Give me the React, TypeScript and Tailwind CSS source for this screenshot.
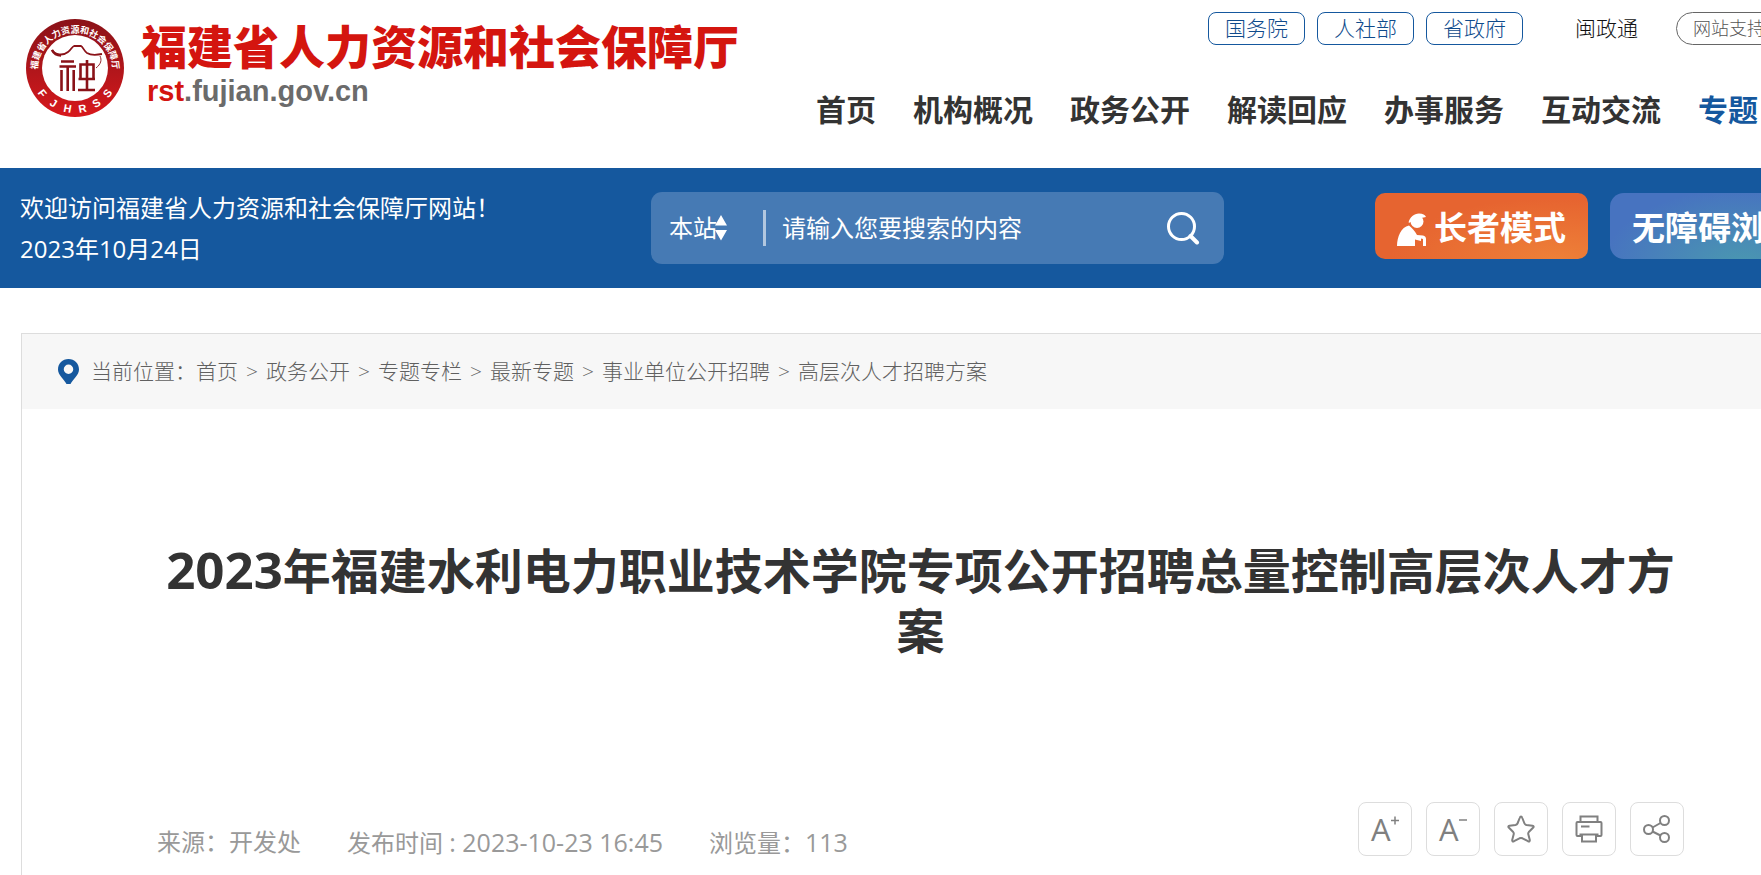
import type { ReactNode } from 'react';

type IconButtonProps = {
	label: string;
	children: ReactNode;
};

const topLinks = ['国务院', '人社部', '省政府'];
const navItems = ['首页', '机构概况', '政务公开', '解读回应', '办事服务', '互动交流', '专题'];
const crumbs = ['首页', '政务公开', '专题专栏', '最新专题', '事业单位公开招聘', '高层次人才招聘方案'];

const Emblem = () => (
	<svg viewBox="0 0 100 100" className="size-[100px] shrink-0" aria-hidden="true">
		<defs>
			<linearGradient id="ring" x1="0" y1="0" x2="0" y2="1">
				<stop offset="0" stopColor="#8a1218" />
				<stop offset="0.55" stopColor="#b3161b" />
				<stop offset="1" stopColor="#d8181c" />
			</linearGradient>
			<path id="upper" d="M12.5 52 A37.5 37.5 0 1 1 87.5 52" />
			<path id="lower" d="M5 50 A45 45 0 0 0 95 50" />
		</defs>
		<circle cx="50" cy="50" r="49" fill="url(#ring)" />
		<circle cx="50" cy="50" r="33" fill="#fff" />
		<text fill="#fff" fontSize="9" fontWeight="700" fontFamily="'Noto Sans CJK SC', sans-serif" textAnchor="middle">
			<textPath href="#upper" startOffset="50%">福建省人力资源和社会保障厅</textPath>
		</text>
		{['F', 'J', 'H', 'R', 'S', 'S'].map((letter, index) => (
			<text key={index} fill="#fff" fontSize="11" fontWeight="700" fontFamily="'Liberation Sans', sans-serif" textAnchor="middle">
				<textPath href="#lower" startOffset={`${21 + index * 11.6}%`}>{letter}</textPath>
			</text>
		))}
		<g fill="none" stroke="#8a1218">
			<path d="M27 32 C30 37 38 38 43 34 C46 32 47 28.5 49 28 H56 C58 29 59 33 62 35 C66 37.5 72 37 77 36" strokeWidth="1.8" />
			<path d="M27 32 C29 36 32 37.5 36 37.5" strokeWidth="2.6" />
			<path d="M75 38 C77 42 76 46 71 50" strokeWidth="0.9" />
			<path d="M36 43.5 H49 M34.5 48.5 H51 M36.5 52 V73 M42.7 48.5 V73 M48.7 52 V73" strokeWidth="2.6" />
			<path d="M62 42 V72 M55.5 61 V46.5 H68.5 V61 M53.5 61 H70 M53 72 H70" strokeWidth="2.6" />
		</g>
	</svg>
);

const ElderIcon = () => (
	<svg viewBox="0 0 29 34" className="h-[34px] w-[29px]" fill="#fff" aria-hidden="true">
		<circle cx="20" cy="8.5" r="6.5" />
		<path d="M11.5 9.5 C13 4 17 0.5 22 0.5 C26 0.5 28 2 29 4 L15 7 C14 9 13 10 11.5 9.5 Z" />
		<path d="M0 33 C0 24 4 14 12 12.5 C15 15 18 18 20 22 L26 22.5 C28 23 29 24 29 26 V33 H26 V26 L24 25.5 V28 L18 26.5 V33 Z" />
	</svg>
);

const IconButton = ({ label, children }: IconButtonProps) => (
	<button type="button" aria-label={label} className="flex size-[54px] items-center justify-center rounded-lg border border-[#ddd] bg-white">
		<svg viewBox="0 0 28 28" className="size-7 overflow-visible" fill="none" stroke="#808080" strokeWidth="2">
			{children}
		</svg>
	</button>
);

const Header = () => (
	<header className="flex items-start">
		<a href="#" className="flex w-[816px] shrink-0 items-start pt-[18px] pl-[25px]">
			<Emblem />
			<span className="ml-4 flex flex-col">
				<span className="text-[46px] leading-[57px] font-black whitespace-nowrap text-[#d4150f]">福建省人力资源和社会保障厅</span>
				<span className="ml-[6px] font-['Liberation_Sans',sans-serif] text-[29px] leading-8 font-bold text-[#6b6b6b]">
					<span className="text-[#d4150f]">rst</span>.fujian.gov.cn
				</span>
			</span>
		</a>
		<div className="shrink-0 pt-3 pb-[35px]">
			<div className="ml-[392px] flex h-[33px] items-center text-[21px] whitespace-nowrap">
				<div className="flex gap-3">
					{topLinks.map((link) => (
						<a key={link} href="#" className="rounded-lg border border-[#15589e] px-4 leading-[31px] font-light text-[#0f4b8c]">
							{link}
						</a>
					))}
				</div>
				<a href="#" className="ml-[52px] leading-[31px] font-light text-[#111]">闽政通</a>
				<a href="#" className="ml-[38px] rounded-full border border-[#666] px-4 text-[18px] leading-[31px] font-light text-[#555]">网站支持</a>
			</div>
			<nav className="mt-[42px] flex gap-[37px] text-[30px] leading-[46px] font-bold whitespace-nowrap text-[#333]">
				{navItems.map((item) => (
					<a key={item} href="#" className={item === '专题' ? 'text-[#15589e]' : ''}>
						{item}
					</a>
				))}
			</nav>
		</div>
	</header>
);

const SearchBand = () => (
	<div className="flex items-center bg-[#15589e] py-[19px] text-2xl text-white">
		<div className="w-[651px] shrink-0 pl-5 leading-[41px]">
			<p>欢迎访问福建省人力资源和社会保障厅网站！</p>
			<p>2023年10月24日</p>
		</div>
		<form className="flex h-[72px] w-[573px] shrink-0 items-center rounded-[11px] bg-[#467ab4] pr-6 pl-[18px]">
			<select aria-label="搜索范围" className="w-12 appearance-none bg-transparent">
				<option>本站</option>
			</select>
			<svg viewBox="0 0 12 26" className="-ml-[2px] h-[26px] w-3" fill="#fff" aria-hidden="true">
				<path d="M6 0 L12 10.5 H0 Z M0 15 H12 L6 25.5 Z" />
			</svg>
			<span className="ml-9 h-9 w-[3px] bg-[#b2c7df]" />
			<input aria-label="搜索" placeholder="请输入您要搜索的内容" className="ml-4 min-w-0 flex-1 bg-transparent outline-none placeholder:text-white placeholder:opacity-100" />
			<button type="submit" aria-label="搜索">
				<svg viewBox="0 0 34 34" className="size-[34px]" fill="none" stroke="#fff" strokeWidth="3">
					<circle cx="15.5" cy="15.5" r="13" />
					<path d="M24.5 25 L31 31.5" strokeWidth="4" strokeLinecap="round" />
				</svg>
			</button>
		</form>
		<div className="ml-[151px] flex shrink-0 gap-[22px] pb-1 text-[33px] leading-[62px] font-bold whitespace-nowrap">
			<button type="button" className="flex items-center gap-2 rounded-[10px] bg-[radial-gradient(ellipse_at_85%_100%,#ee8038,#e66430_65%)] px-[22px] pt-1">
				<span className="pt-1">
					<ElderIcon />
				</span>
				长者模式
			</button>
			<button type="button" className="rounded-[14px] bg-[radial-gradient(ellipse_at_75%_110%,#4a98b0,#4773c0_75%)] px-[22px] pt-1">无障碍浏</button>
		</div>
	</div>
);

const Breadcrumb = () => (
	<nav className="flex h-[75px] items-center bg-[#f7f7f7] pl-9 text-[21px] font-light text-[#606060]">
		<svg viewBox="0 0 21 25" className="mr-3 h-[25px] w-[21px]" aria-hidden="true">
			<path fillRule="evenodd" fill="#15589e" d="M10.5 0 C16.5 0 21 4.5 21 10.5 C21 16 15 20 12.5 25 H8.5 C6 20 0 16 0 10.5 C0 4.5 4.5 0 10.5 0 Z M10.5 5.5 A4.7 4.7 0 1 0 10.5 15 A4.7 4.7 0 1 0 10.5 5.5 Z" />
		</svg>
		<span>当前位置：</span>
		{crumbs.map((crumb, index) => (
			<span key={crumb}>
				{index > 0 && <span className="mx-2">&gt;</span>}
				<a href="#">{crumb}</a>
			</span>
		))}
	</nav>
);

const ArticleHead = () => (
	<article className="pr-[77px] pb-[19px] pl-[135px]">
		<h1 className="mt-[132px] text-center text-5xl leading-[60px] font-bold text-[#333]">
			<span className="text-[51px] leading-none">2023</span>年福建水利电力职业技术学院专项公开招聘总量控制高层次人才方案
		</h1>
		<div className="mt-[141px] flex items-end justify-between">
			<div className="flex gap-[46px] text-2xl leading-[26px] text-[#999]">
				<span>来源：开发处</span>
				<span>
					发布时间 <span className="text-[25px]">: 2023-10-23 16:45</span>
				</span>
				<span>
					浏览量：<span className="text-[25px]">113</span>
				</span>
			</div>
			<div className="flex gap-[14px]">
				<IconButton label="放大字体">
					<text x="0" y="26" fontSize="31" fontWeight="400" fill="#808080" stroke="none" fontFamily="'Open Sans', sans-serif">A</text>
					<path d="M20 5.5 H28 M24 1.5 V9.5" strokeWidth="1.5" />
				</IconButton>
				<IconButton label="缩小字体">
					<text x="0" y="26" fontSize="31" fontWeight="400" fill="#808080" stroke="none" fontFamily="'Open Sans', sans-serif">A</text>
					<path d="M20 5 H28" strokeWidth="1.5" />
				</IconButton>
				<IconButton label="收藏">
					<path strokeLinejoin="round" d="M14 1.5 Q14.8 1.5 15.3 3 L17.5 8.5 Q18 9.7 19.5 10 L25.5 10.8 Q27.5 11.3 26 12.8 L21.8 17 Q21 18 21.3 19.2 L22.8 25 Q23 27 21 26.2 L15.5 23.3 Q14 22.7 12.5 23.3 L7 26.2 Q5 27 5.2 25 L6.7 19.2 Q7 18 6.2 17 L2 12.8 Q0.5 11.3 2.5 10.8 L8.5 10 Q10 9.7 10.5 8.5 L12.7 3 Q13.2 1.5 14 1.5 Z" />
				</IconButton>
				<IconButton label="打印">
					<path d="M5.5 6.5 V1.5 H22.5 V6.5" />
					<path d="M6.5 21 H2.5 Q1.5 21 1.5 20 V8 Q1.5 7 2.5 7 H25.5 Q26.5 7 26.5 8 V20 Q26.5 21 25.5 21 H21.5" />
					<path d="M4.5 19.5 H23.5 M7 19.5 V26.5 H21 V19.5 M6 11.5 H14.5" />
				</IconButton>
				<IconButton label="分享">
					<circle cx="5.5" cy="14.5" r="4.5" />
					<circle cx="21.5" cy="5.5" r="4.5" />
					<circle cx="21.5" cy="22.5" r="4.5" />
					<path d="M9.5 12.5 L17.5 8 M9.5 16.5 L17.5 20.5" />
				</IconButton>
			</div>
		</div>
	</article>
);

export default function App() {
	return (
		<div className="overflow-hidden bg-white font-['Open_Sans','Noto_Sans_CJK_SC',sans-serif]" lang="zh-CN">
			<Header />
			<SearchBand />
			<main className="mt-[45px] ml-[21px] border-t border-l border-[#ddd]">
				<Breadcrumb />
				<ArticleHead />
			</main>
		</div>
	);
}
